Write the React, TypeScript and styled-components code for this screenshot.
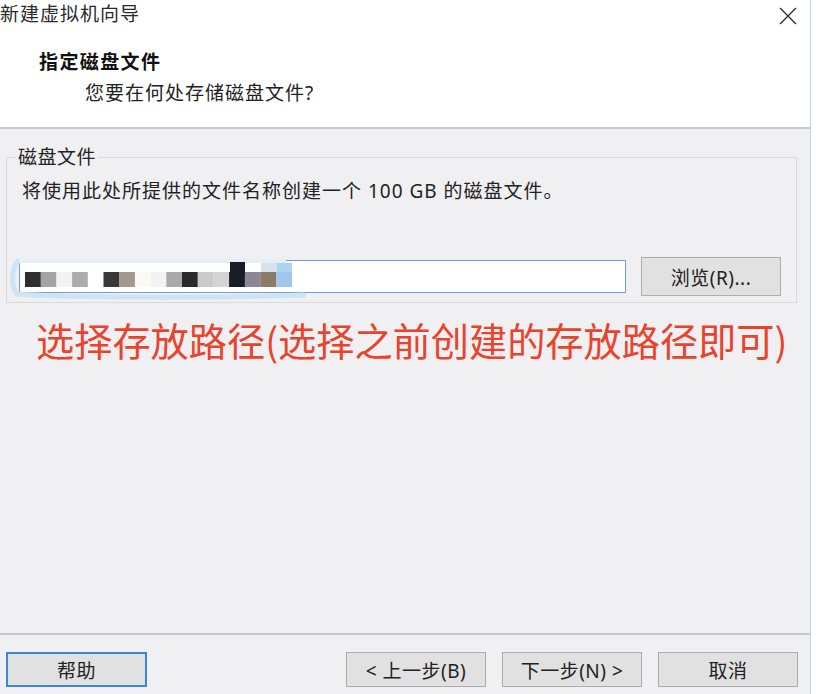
import React from "react";
import styled, { createGlobalStyle } from "styled-components";

const UI_FONT = `"Noto Sans", "Noto Sans CJK SC", sans-serif`;

const mosaic = [
  "#2f2f2f", "#a3a3a3", "#f2f2f2", "#acacac", "#ffffff", "#383838",
  "#a5998f", "#fdf9f5", "#f3f3f3", "#aaaaaa", "#2a2a2a", "#cbcbcb",
  "#d4d4d4", "#161c28", "#8b8794", "#8d7b69", "#9fc7ec",
];

const NewDiskWizard = () => {
  return (
    <Window>
      <Top>
        <TitleBar>
          <Title>新建虚拟机向导</Title>
          <CloseBtn>
            <svg width="18" height="18" viewBox="0 0 18 18">
              <path d="M1 1 L17 17 M17 1 L1 17" stroke="#2b2b2b" strokeWidth="1.3" />
            </svg>
          </CloseBtn>
        </TitleBar>
        <Header>
          <HeadTitle>指定磁盘文件</HeadTitle>
          <HeadSub>您要在何处存储磁盘文件?</HeadSub>
        </Header>
      </Top>

      <Main>
        <Group>
          <Legend>磁盘文件</Legend>
          <Info>将使用此处所提供的文件名称创建一个 100 GB 的磁盘文件。</Info>
          <PathRow>
            <PathInput>
              <Blur width="300" height="44" viewBox="0 0 300 44">
                <path
                  d="M4 4 C-3 12 -3 30 3 37 C60 41 200 41 290 38"
                  fill="none"
                  stroke="#cfe3f5"
                  strokeWidth="5"
                  strokeLinecap="round"
                />
                <path d="M5 4 L272 4" stroke="#e3eef8" strokeWidth="4" />
                {mosaic.map((c, i) => (
                  <rect key={i} x={11 + i * 15.7} y={15} width={15.9} height={15} fill={c} />
                ))}
                <rect x={216} y={5} width={15} height={12} fill="#161c28" />
                <rect x={247} y={6} width={16} height={9} fill="#d8e2ea" />
                <rect x={263} y={6} width={15} height={9} fill="#a9d5ef" />
              </Blur>
            </PathInput>
            <Btn>浏览(R)...</Btn>
          </PathRow>
        </Group>
        <Note>选择存放路径(选择之前创建的存放路径即可)</Note>
      </Main>

      <Footer>
        <Btn $focused>帮助</Btn>
        <NavGroup>
          <Btn>&lt; 上一步(B)</Btn>
          <Btn>下一步(N) &gt;</Btn>
          <Btn>取消</Btn>
        </NavGroup>
      </Footer>
    </Window>
  );
};

export default function App() {
  return (
    <>
      <GlobalStyle />
      <NewDiskWizard />
    </>
  );
}

const GlobalStyle = createGlobalStyle`
  html, body {
    margin: 0;
    padding: 0;
    background: #ffffff;
  }
  body {
    font-family: ${UI_FONT};
    color: #1e1e1e;
  }
`;

const Window = styled.div`
  width: 810px;
  height: 694px;
  display: flex;
  flex-direction: column;
  border-right: 1px solid #b9d5ee;
  background: #f0eff1;
  overflow: hidden;
`;

const Top = styled.div`
  background: #ffffff;
  border-bottom: 2px solid #c8c8c8;
  height: 127px;
`;

const TitleBar = styled.div`
  height: 30px;
  display: flex;
  align-items: center;
  justify-content: space-between;
  padding-right: 12px;
`;

const Title = styled.div`
  font-size: 19px;
  letter-spacing: 1px;
  line-height: 26px;
  margin-left: 0;
  margin-top: -3px;
  color: #2a2a2a;
`;

const CloseBtn = styled.div`
  width: 18px;
  height: 18px;
  display: flex;
  margin-right: 1px;
  margin-top: 1px;
`;

const Header = styled.div`
  padding-top: 19px;
`;

const HeadTitle = styled.div`
  font-size: 19px;
  letter-spacing: 1.4px;
  font-weight: 700;
  line-height: 26px;
  padding-left: 39px;
  color: #111;
`;

const HeadSub = styled.div`
  font-size: 19px;
  letter-spacing: 1px;
  line-height: 26px;
  margin-top: 5px;
  padding-left: 85px;
  color: #222;
`;

const Main = styled.div`
  flex: 1;
  display: flex;
  flex-direction: column;
`;

const Group = styled.fieldset`
  margin: 16px 13px 0 6px;
  padding: 0 15px 6px 12px;
  border: 1px solid #dadadc;
  min-width: 0;
`;

const Legend = styled.legend`
  font-size: 19px;
  letter-spacing: 0.5px;
  line-height: 24px;
  padding: 0 2px;
  margin-left: -3px;
  color: #222;
`;

const Info = styled.div`
  font-size: 19px;
  letter-spacing: 1px;
  line-height: 24px;
  margin-top: 10px;
  padding-left: 3px;
  color: #222;
`;

const PathRow = styled.div`
  margin-top: 54px;
  height: 39px;
  display: flex;
  align-items: center;
  gap: 15px;
`;

const PathInput = styled.div`
  position: relative;
  flex: 1;
  height: 33px;
  box-sizing: border-box;
  background: #ffffff;
  border: 1px solid #6f9fd3;
`;

const Blur = styled.svg`
  position: absolute;
  left: -6px;
  top: -4px;
  overflow: visible;
`;

const Btn = styled.button<{ $focused?: boolean }>`
  width: ${(p) => (p.$focused ? "141px" : "140px")};
  height: ${(p) => (p.$focused ? "35px" : "39px")};
  box-sizing: border-box;
  flex-shrink: 0;
  display: flex;
  align-items: center;
  justify-content: center;
  background: #e1e1e1;
  border: ${(p) => (p.$focused ? "2px solid #3a86d8" : "1px solid #adadad")};
  border-radius: 0;
  font-family: ${UI_FONT};
  font-size: 19px;
  letter-spacing: 0.5px;
  color: #222;
  padding: 0;
`;

const Note = styled.div`
  margin-top: 15px;
  padding-left: 36px;
  font-family: "Noto Sans CJK SC", sans-serif;
  font-size: 38.2px;
  line-height: 44px;
  color: #e8432d;
  white-space: nowrap;
`;

const Footer = styled.div`
  height: 61px;
  box-sizing: border-box;
  border-top: 2px solid #c8c8c8;
  padding: 17px 12px 0 6px;
  display: flex;
  align-items: flex-start;
  justify-content: space-between;

  ${Btn} {
    height: 35px;
  }
`;

const NavGroup = styled.div`
  display: flex;
  gap: 16px;
`;
